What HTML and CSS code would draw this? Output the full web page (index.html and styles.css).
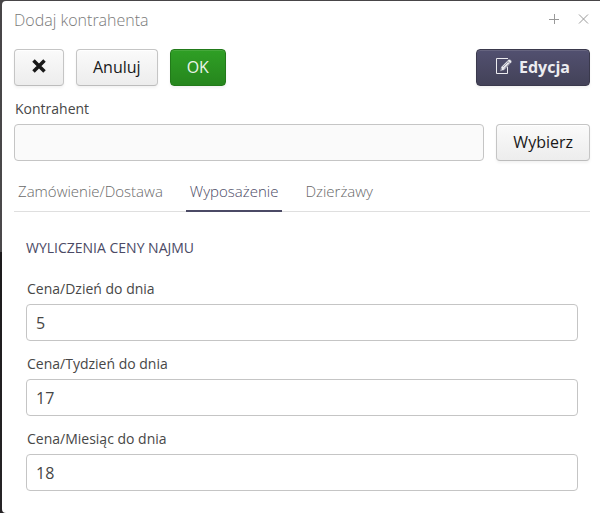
FILE: index.html
```html
<!DOCTYPE html>
<html lang="pl">
<head>
  <meta charset="UTF-8">
  <meta name="viewport" content="width=device-width, initial-scale=1.0">
  <title>Dodaj kontrahenta</title>
  <link rel="stylesheet" href="styles.css">
</head>
<body>
  <div class="window">
    <header class="window-header">
      <h1>Dodaj kontrahenta</h1>
      <button type="button" class="window-control" aria-label="Maksymalizuj">
        <svg width="11" height="11" viewBox="0 0 11 11"><path d="M5.5 0v10M0 5.500h10"/></svg>
      </button>
      <button type="button" class="window-control" aria-label="Zamknij">
        <svg width="11" height="11" viewBox="0 0 11 11"><path d="M1 0.500l9 9M10 0.500l-9 9"/></svg>
      </button>
    </header>

    <form>
      <!-- Toolbar -->
      <div class="toolbar">
        <button type="button" class="btn" aria-label="Usuń">
          <svg class="icon-times" width="16" height="16" viewBox="0 0 16 16"><path d="M2.500 1.500l11 11M13.500 1.500l-11 11"/></svg>
        </button>
        <button type="button" class="btn">Anuluj</button>
        <button type="submit" class="btn btn-ok">OK</button>
        <button type="button" class="btn btn-edit">
          <svg class="icon-edit" width="17" height="17" viewBox="0 0 17 17">
            <path class="sheet" d="M12 .5H.5v15h11V8"/>
            <path class="pencil" d="M4 13.300l1.200-4.500 7-7q1-1 2.200 0l.8.800q1 1 0 2.100l-7 7.300z"/>
            <path class="groove" d="M6.800 9l5-5M8.300 10.500l5-5M5 12.300l.6-2M11.500 3l3 3"/>
          </svg>
          Edycja
        </button>
      </div>

      <!-- Contractor picker -->
      <div class="field">
        <label for="contractor">Kontrahent</label>
        <div class="picker">
          <input type="text" id="contractor" readonly>
          <button type="button" class="btn">Wybierz</button>
        </div>
      </div>

      <nav class="tabs">
        <a href="#delivery">Zamówienie/Dostawa</a>
        <a href="#equipment" class="active">Wyposażenie</a>
        <a href="#leases">Dzierżawy</a>
      </nav>

      <section class="panel" id="equipment">
        <h2>Wyliczenia ceny najmu</h2>
        <div class="field">
          <label for="priceDay">Cena/Dzień do dnia</label>
          <input type="text" id="priceDay" value="5">
        </div>
        <div class="field">
          <label for="priceWeek">Cena/Tydzień do dnia</label>
          <input type="text" id="priceWeek" value="17">
        </div>
        <div class="field">
          <label for="priceMonth">Cena/Miesiąc do dnia</label>
          <input type="text" id="priceMonth" value="18">
        </div>
      </section>
    </form>
  </div>
</body>
</html>
```

FILE: styles.css
```css
* {
  box-sizing: border-box;
}
body {
  margin: 0;
  padding: 1px 0 0 2px;
  min-height: 100vh;
  display: flex;
  background: linear-gradient(#474547 0, #4b494b 252px, #1c1a1c 252px, #262426 100%);
  font-family: "Open Sans", "Noto Sans", sans-serif;
  font-size: 16px;
  color: #474747;
}
button, input {
  font: inherit;
}
.window {
  flex: 1;
  padding: 0 10px 12px 12px;
  background: #fff;
  border-radius: 4px 0 0 4px;
}
.window-header {
  display: flex;
  align-items: center;
  gap: 18px;
  height: 36px;
  padding-right: 1px;
}
h1 {
  flex: 1;
  margin: 0;
  padding-top: 2px;
  font-size: 16px;
  font-weight: 300;
  line-height: 34px;
  color: #7a7a7a;
}
.window-control {
  display: flex;
  padding: 0;
  border: none;
  background: none;
  cursor: pointer;
}
.window-control svg {
  fill: none;
  stroke: #999;
}

.toolbar {
  display: flex;
  gap: 12px;
  padding-top: 12px;
}
.btn {
  display: flex;
  align-items: center;
  gap: 7px;
  height: 37px;
  padding: 0 16px 2px;
  border: 1px solid #c5c5c5;
  border-bottom-color: #bcbcbc;
  border-radius: 4px;
  background: linear-gradient(#fafafa 2%, #ededed 98%);
  box-shadow: inset 0 1px 0 #fff, 0 2px 3px rgba(0, 0, 0, 0.05);
  color: #191919;
  cursor: pointer;
}
.btn-ok {
  border-color: #227a1a;
  background: linear-gradient(#2f9f25, #26861d);
  box-shadow: inset 0 1px 0 #46a83c, 0 2px 3px rgba(0, 0, 0, 0.05);
  color: #eaf4e9;
}
.btn-edit {
  gap: 6px;
  margin-left: auto;
  padding: 0 19px 2px;
  border-color: #3a394c;
  background: linear-gradient(#525070, #434258);
  box-shadow: inset 0 1px 0 #66647f, 0 2px 3px rgba(0, 0, 0, 0.05);
  color: #ececf0;
  font-weight: 700;
}
.icon-times {
  fill: none;
  stroke: #191919;
  stroke-width: 3.5;
}
.icon-edit {
  fill: none;
  stroke: #ececf0;
}
.icon-edit .pencil {
  fill: #ececf0;
  stroke: #4b4a65;
  stroke-width: 0.5;
}
.icon-edit .groove {
  stroke: #4b4a65;
  stroke-width: 0.6;
}

label {
  display: block;
  padding: 0 1px;
  font-size: 14px;
  line-height: 20px;
  margin-bottom: 5px;
}
input {
  display: block;
  width: 100%;
  height: 37px;
  padding: 0 9px;
  border: 1px solid #c5c5c5;
  border-radius: 4px;
  background: #fff;
  color: #474747;
}
input:read-only {
  background: #fafafa;
}
.field {
  margin-top: 13px;
}
.picker {
  display: flex;
  gap: 12px;
}
.picker input {
  flex: 1;
  min-width: 0;
}

.tabs {
  display: flex;
  gap: 19px;
  margin-top: 12px;
  border-bottom: 1px solid #dfdfdf;
}
.tabs a {
  height: 38px;
  margin-bottom: -1px;
  padding: 0 4px;
  font-size: 15px;
  font-weight: 300;
  line-height: 37px;
  color: #696969;
  text-decoration: none;
}
.tabs .active {
  height: 39px;
  border-bottom: 2px solid #4b4a65;
  color: #4b4a65;
}

.panel {
  padding: 26px 12px 10px;
}
h2 {
  margin: 0 0 21px;
  font-size: 14px;
  font-weight: 400;
  line-height: 20px;
  color: #4b4a65;
  text-transform: uppercase;
}
```
